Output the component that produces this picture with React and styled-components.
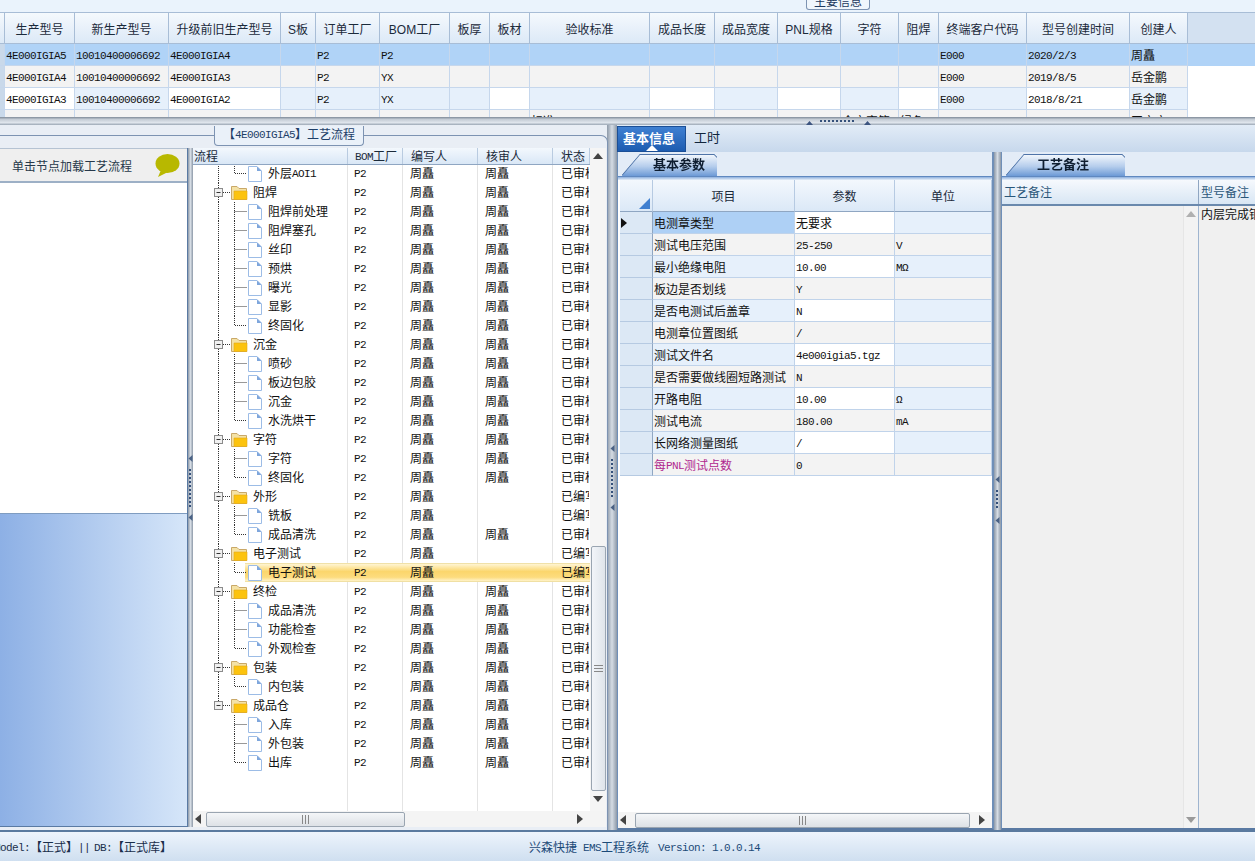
import React from 'react';
import styled, { createGlobalStyle } from 'styled-components';

const GlobalStyle = createGlobalStyle`
  html, body { margin: 0; padding: 0; background: #e9eef5; }
  * { box-sizing: border-box; }
  body { font-family: "Noto Sans CJK SC", "Liberation Sans", sans-serif; font-size: 12px; color: #111; }
`

const Page = styled.div`
  width: 1255px;
  height: 861px;
  overflow: hidden;
  display: flex;
  flex-direction: column;
  background: #e9eef5;
`
const Latin = styled.span`
  font-family: "Liberation Mono", "DejaVu Sans Mono", monospace;
  font-size: 11px;
  letter-spacing: -0.6px;
  vertical-align: 1px;
`
// ascii runs get the narrow mono face, the way the old bitmap font looks
const Txt = ({ children }) => String(children || '').split(/([\x00-\x7f\u03a9]+)/).map((part, i) => (
  i % 2 ? <Latin key={i}>{part}</Latin> : part
))

/* top strip + grid */
const TopStrip = styled.div`
  height: 12px;
  flex: none;
  padding-left: 806px;
  overflow: hidden;
  background: #eaf3fc;
`
const CroppedTab = styled.div`
  width: 64px;
  height: 10px;
  background: #f0f6fc;
  border: 1px solid #7d93b2;
  border-top: none;
  border-radius: 0 0 3px 3px;
  line-height: 1px;
  text-align: center;
  color: #1e3a5f;
`
const TopGrid = styled.div`
  height: 105px;
  flex: none;
  overflow: hidden;
  background: #fff;
`
const HeadRow = styled.div`
  display: flex;
  height: 32px;
  background: #d3e1f1;
  border-top: 1px solid #a8bdd6;
  border-bottom: 1px solid #a8bdd6;
`
const HeadCell = styled.div`
  flex: none;
  width: ${p => p.$w}px;
  display: flex;
  align-items: center;
  justify-content: center;
  background: linear-gradient(#f5f9fd, #dce9f7);
  border-right: 1px solid #a8bdd6;
  font-family: "Liberation Sans", "Noto Sans CJK SC", sans-serif;
  color: #1b2a3a;
  white-space: nowrap;
`
const DataRow = styled.div`
  display: flex;
  height: 22px;
  background: ${p => (p.$selected ? '#b0d3f7' : '#fff')};
`
const DataCell = styled.div`
  flex: none;
  width: ${p => p.$w}px;
  padding-left: 1px;
  line-height: 21px;
  background: ${p => p.$bg};
  border-right: 1px solid #c6d7ec;
  border-bottom: 1px solid #c6d7ec;
  white-space: nowrap;
  overflow: hidden;
`

/* splitters */
const HSplitter = styled.div`
  height: 8px;
  flex: none;
  display: flex;
  padding-left: 806px;
  background: linear-gradient(#7f8a98, #c4ccd5 30%, #dfe5ec 70%, #9aa6b4);
`
const VSplitterBar = styled.div`
  width: ${p => p.$w}px;
  flex: none;
  display: flex;
  justify-content: center;
  align-items: flex-start;
  padding-top: ${p => p.$top}px;
  background: linear-gradient(90deg, #8d99a8, #d5dce4 50%, #8d99a8);
`
const VGrip = ({ height }) => (
  <svg width="5" height={height}>
    <path d="M4.5 0 L0.5 3.5 L4.5 7 Z" fill="#4a6285" />
    <path d={`M2 14 V${height - 14}`} stroke="#34507a" strokeWidth="2" strokeDasharray="2 2" />
    <path d={`M4.5 ${height - 7} L0.5 ${height - 3.5} L4.5 ${height} Z`} fill="#4a6285" />
  </svg>
)
const HGrip = () => (
  <svg width="66" height="8">
    <path d="M0 8 L3.5 4 L7 8 Z" fill="#3d5580" />
    <path d="M14 4 H50" stroke="#34507a" strokeWidth="2" strokeDasharray="2 2" />
    <path d="M58 8 L61.5 4 L65 8 Z" fill="#3d5580" />
  </svg>
)

const Main = styled.div`
  flex: 1;
  display: flex;
  min-height: 0;
`

/* left group */
const LeftGroup = styled.div`
  position: relative;
  width: 607px;
  flex: none;
  padding-top: 10px;
  display: flex;
`
const GroupTitle = styled.div`
  position: absolute;
  left: 214px;
  top: 1px;
  width: 150px;
  height: 20px;
  background: #eaf1f9;
  border: 1px solid #7d93b2;
  border-top: none;
  border-radius: 0 0 4px 4px;
  text-align: center;
  line-height: 16px;
  color: #1e3f68;
`
const GroupFrame = styled.div`
  flex: 1;
  display: flex;
  padding: 12px 1px 3px 0;
  border-top: 1px solid #7d93b2;
  border-right: 1px solid #7d93b2;
  border-top-right-radius: 7px;
`
const SidePanel = styled.div`
  width: 188px;
  flex: none;
  display: flex;
  flex-direction: column;
  border-right: 1px solid #5a7aa3;
  border-bottom: 1px solid #5a7aa3;
`
const SideHead = styled.div`
  height: 35px;
  flex: none;
  display: flex;
  align-items: center;
  justify-content: space-between;
  padding: 0 7px 0 12px;
  background: #efefef;
  border-top: 1px solid #b5c3d3;
  border-bottom: 2px solid #9db0c6;
  color: #27384a;
`
const SideBody = styled.div`
  height: 331px;
  flex: none;
  background: #fff;
  border-bottom: 1px solid #7f9cc0;
`
const SideFill = styled.div`
  flex: 1;
  background: linear-gradient(90deg, #8db0e5, #d6e6f9);
`
const Bubble = () => (
  <svg width="25" height="25" viewBox="0 0 25 25">
    <ellipse cx="12.5" cy="10.5" rx="12" ry="9.5" fill="#b8b800" />
    <path d="M6 17 L3 24 L13 19 Z" fill="#b8b800" />
  </svg>
)

/* tree */
const TreeWrap = styled.div`
  flex: 1;
  display: flex;
  flex-direction: column;
  min-width: 0;
  background: #fff;
`
const TreeMain = styled.div`
  flex: 1;
  display: flex;
  min-height: 0;
`
const TreeTable = styled.div`
  width: 397px;
  flex: none;
  display: flex;
  flex-direction: column;
  overflow: hidden;
`
const TreeHead = styled.div`
  height: 17px;
  flex: none;
  display: flex;
  position: relative;
  z-index: 1;
  background: linear-gradient(#f3f8fd, #d9e7f6);
  border-bottom: 1px solid #8fa6c2;
`
const TreeHeadCell = styled.div`
  flex: none;
  width: ${p => p.$w}px;
  padding-left: ${p => p.$pad}px;
  line-height: 16px;
  border-right: 1px solid #b9cbe0;
  color: #1b2a3a;
  overflow: hidden;
  white-space: nowrap;
`
const TreeRows = styled.div`
  flex: 1;
  display: flex;
  flex-direction: column;
  margin-top: -1px;
  min-height: 0;
`
const TreeRow = styled.div`
  display: flex;
  flex: none;
  height: 19px;
  background: ${p => (p.$selected
    ? 'linear-gradient(#e9d896, #fff3cc 8%, #fbd66c 45%, #fddc7e 75%, #fff0bf 92%, #e9d896) right / 345px 100% no-repeat'
    : 'none')};
`
const TreeFiller = styled.div`
  flex: 1;
  display: flex;
`
const TreeCell = styled.div`
  flex: none;
  width: ${p => p.$w}px;
  padding-left: ${p => p.$pad}px;
  padding-bottom: 2px;
  display: flex;
  align-items: center;
  border-right: 1px solid ${p => (p.$plain ? 'transparent' : '#e4e4e4')};
  overflow: hidden;
  white-space: nowrap;
`
const TreeLatin = styled(Latin)`
  margin-top: 2px;
`
const GuideSvg = styled.svg`
  flex: none;
  margin-bottom: -2px;
`
const Guide = ({ folder, last, end }) => {
  const root = folder ? (end ? 'M25.5 0 V5' : 'M25.5 0 V5 M25.5 14 V19') : (end ? '' : 'M25.5 0 V19')
  return (
    <GuideSvg width={folder ? 60 : 75} height="19">
      {root && <path d={root} stroke="#333" strokeDasharray="1 1" />}
      {folder ? (
        <g>
          <rect x="21.5" y="5.5" width="8" height="8" fill="#f1f1f1" stroke="#8b8b8b" />
          <path d="M23.5 9.5 H27.5" stroke="#333" />
          <path d="M30 9.5 H37" stroke="#333" strokeDasharray="1 1" />
          <path d="M38.5 3.5 H44 L46 5.5 H53.5 V16.5 H38.5 Z" fill="#f4e2a6" stroke="#c9a868" />
          <path d="M41 8 H54 V16.5 H41 Z" fill="#fcc30e" stroke="#e0a91c" strokeWidth="0.6" />
        </g>
      ) : (
        <g>
          <path d={last ? 'M41.5 0 V9.5 H54' : 'M41.5 0 V19 M41.5 9.5 H54'} fill="none" stroke="#333" strokeDasharray="1 1" />
          <path d="M55.5 2.5 H64 L68.5 7 V17.5 H55.5 Z" fill="#fff" stroke="#9cbce6" />
          <path d="M64 2.5 V7 H68.5 Z" fill="#7ea6dc" />
        </g>
      )}
    </GuideSvg>
  )
}

/* scrollbars */
const VTrack = styled.div`
  width: 16px;
  flex: none;
  display: flex;
  flex-direction: column;
  align-items: center;
  background: #f5f5f5;
`
const VThumb = styled.div`
  width: 15px;
  margin-top: ${p => p.$top}px;
  height: ${p => p.$h}px;
  flex: none;
  display: flex;
  align-items: center;
  justify-content: center;
  background: linear-gradient(90deg, #f2f5f9, #dfe4ea);
  border: 1px solid #9aa5b1;
  border-radius: 2px;
`
const VGripLines = styled.div`
  width: 9px;
  height: 7px;
  border-top: 1px solid #888;
  border-bottom: 1px solid #888;
  background: linear-gradient(#888, #888) center / 100% 1px no-repeat;
`
const HTrack = styled.div`
  height: ${p => p.$h || 16}px;
  flex: none;
  display: flex;
  align-items: center;
  background: #f4f4f4;
  width: ${p => p.$w}px;
`
const HThumb = styled.div`
  margin-left: ${p => p.$left}px;
  width: ${p => p.$w}px;
  height: 15px;
  flex: none;
  display: flex;
  align-items: center;
  justify-content: center;
  background: linear-gradient(#f4f6f8, #dde1e6);
  border: 1px solid #9aa5b1;
  border-radius: 2px;
`
const HGripLines = styled.div`
  width: 7px;
  height: 9px;
  border-left: 1px solid #888;
  border-right: 1px solid #888;
  background: linear-gradient(#888, #888) center / 1px 100% no-repeat;
`
const ArrowSlot = styled.div`
  flex: none;
  width: ${p => p.$w || 16}px;
  height: 16px;
  margin-left: ${p => p.$left || 0}px;
  display: flex;
  align-items: center;
  justify-content: center;
`
const Arrow = ({ dir, color = '#444' }) => {
  const shapes = { up: '0,7 5,1 10,7', down: '0,1 5,7 10,1', left: '7,0 1,5 7,10', right: '1,0 7,5 1,10' };
  const vertical = dir === 'up' || dir === 'down';
  return (
    <svg width={vertical ? 10 : 8} height={vertical ? 8 : 10}>
      <polygon points={shapes[dir]} fill={color} />
    </svg>
  );
}
const HScrollbar = ({ w, thumbLeft, thumbW, gap }) => (
  <HTrack $w={w}>
    <ArrowSlot $left={1} $w={8}><Arrow dir="left" /></ArrowSlot>
    <HThumb $left={thumbLeft} $w={thumbW}><HGripLines /></HThumb>
    <ArrowSlot $left={gap} $w={8}><Arrow dir="right" /></ArrowSlot>
  </HTrack>
)

/* right side */
const RightSide = styled.div`
  flex: 1;
  min-width: 0;
  display: flex;
  flex-direction: column;
`
const TabStrip = styled.div`
  height: 27px;
  flex: none;
  display: flex;
  background: linear-gradient(#e2ecf7, #c7d8ec);
`
const ActiveTab = styled.div`
  position: relative;
  width: 69px;
  margin-top: 1px;
  padding-right: 5px;
  text-align: center;
  line-height: 21px;
  font-size: 13px;
  font-weight: 700;
  color: #fff;
  background: linear-gradient(#3f80d2, #1d5cb0);
  border: 1px solid #1b4f96;
  &::after {
    content: '';
    position: absolute;
    left: 28px;
    bottom: 0;
    border: 6px solid transparent;
    border-top: none;
    border-bottom-color: #fff;
  }
`
const PlainTab = styled.div`
  padding-left: 8px;
  line-height: 23px;
  font-size: 13px;
  color: #10243c;
`
const Panels = styled.div`
  flex: 1;
  display: flex;
  min-height: 0;
`
const Panel = styled.div`
  width: ${p => p.$w}px;
  flex: ${p => (p.$w ? 'none' : 1)};
  display: flex;
  flex-direction: column;
  background: #fff;
  border-left: 1px solid #6f8fb8;
  border-right: ${p => (p.$w ? '2px solid #6f8fb8' : 'none')};
  border-bottom: 2px solid #5a7aa3;
`
const SubTabRow = styled.div`
  height: 25px;
  flex: none;
  padding: 3px 0 0 4px;
  background: #e3ecf7;
  border-bottom: 1px solid #5f88c0;
`
const SubTabEdge = styled.div`
  width: ${p => p.$w}px;
  filter: drop-shadow(0 -0.5px 0 #4f74a8) drop-shadow(0.5px 0 0 #4f74a8);
`
const SubTab = styled.div`
  height: 21px;
  padding-left: ${p => p.$pad}px;
  line-height: 18px;
  font-size: 13px;
  font-weight: 700;
  color: #0e1d30;
  background: linear-gradient(#f1f6fc, #b5cdec 55%, #6d9ad6);
  clip-path: polygon(0 100%, 18px 0, calc(100% - 3px) 0, 100% 3px, 100% 100%);
`
const SubBand = styled.div`
  height: 3px;
  flex: none;
  background: linear-gradient(#8db0de, #e6eef8);
`
const ParamBody = styled.div`
  flex: 1;
  min-height: 0;
  padding-left: 2px;
  background: #fff;
`
const ParamRow = styled.div`
  display: flex;
  height: 22px;
`
const ParamHeadRow = styled.div`
  display: flex;
  height: 32px;
`
const ParamHead = styled.div`
  flex: none;
  width: ${p => p.$w}px;
  position: relative;
  display: flex;
  align-items: center;
  justify-content: center;
  background: linear-gradient(#f3f8fd, #dbe8f7);
  border-right: 1px solid #b6cae2;
  border-bottom: 1px solid #8fa6c2;
  color: #1b2a3a;
`
const CornerMark = styled.svg`
  position: absolute;
  right: 2px;
  bottom: 2px;
`
const RowHead = styled.div`
  flex: none;
  width: 33px;
  display: flex;
  align-items: center;
  background: #dce8f5;
  border-right: 1px solid #8fa6c2;
  border-bottom: 1px solid #b6cae2;
`
const ParamCell = styled.div`
  flex: none;
  width: ${p => p.$w}px;
  padding-left: 1px;
  line-height: 21px;
  background: ${p => p.$bg};
  color: ${p => p.$color || '#111'};
  border-right: 1px solid #c0d3ea;
  border-bottom: 1px solid #c0d3ea;
  white-space: nowrap;
  overflow: hidden;
`
const NoteHeadRow = styled.div`
  height: 26px;
  flex: none;
  display: flex;
  background: linear-gradient(#f6f9fd, #d8e6f4);
  border-bottom: 2px solid #6a89ad;
`
const NoteHead = styled.div`
  flex: none;
  width: ${p => p.$w}px;
  padding-left: 2px;
  line-height: 23px;
  color: #2a5679;
  border-right: 1px solid #8fa6c2;
`
const NoteBody = styled.div`
  flex: 1;
  min-height: 0;
  display: flex;
  background: #f0f0f0;
`
const NoteBlank = styled.div`
  width: 181px;
  flex: none;
`
const NoteScroll = styled.div`
  width: 16px;
  flex: none;
  display: flex;
  flex-direction: column;
  align-items: center;
  justify-content: space-between;
  padding: 4px 0;
  background: #f3f3f3;
  border-left: 1px solid #e6e6e6;
  border-right: 1px solid #9fb5d0;
`
const NoteText = styled.div`
  flex: 1;
  padding-left: 2px;
  white-space: nowrap;
  overflow: hidden;
  line-height: 16px;
`

/* status bar */
const StatusBar = styled.div`
  height: 31px;
  flex: none;
  display: flex;
  align-items: center;
  overflow: hidden;
  background: linear-gradient(#edf4fc, #cfdff0);
  border-top: 2px solid #5a7a9f;
  color: #1c4a78;
`
const StatusLeft = styled.div`
  width: 535px;
  flex: none;
  margin-left: -6px;
  color: #1a2e4a;
`
const StatusPipes = styled(Latin)`
  margin-right: 4px;
`
const StatusCenter = styled.div`
  white-space: pre;
`
const VersionText = styled(Latin)`
  margin-left: 3px;
`

const NAME = '周矗'
const topCols = [5, 70, 94, 112, 35, 64, 70, 40, 40, 120, 65, 63, 63, 58, 40, 88, 103, 58]
const topHeads = ['', '生产型号', '新生产型号', '升级前旧生产型号', 'S板', '订单工厂', 'BOM工厂', '板厚', '板材', '验收标准', '成品长度', '成品宽度', 'PNL规格', '字符', '阻焊', '终端客户代码', '型号创建时间', '创建人']
const topRows = [
  { cells: ['', '4E000IGIA5', '10010400006692', '4E000IGIA4', '', 'P2', 'P2', '', '', '', '', '', '', '', '', 'E000', '2020/2/3', NAME], kind: 'sel' },
  { cells: ['', '4E000IGIA4', '10010400006692', '4E000IGIA3', '', 'P2', 'YX', '', '', '', '', '', '', '', '', 'E000', '2019/8/5', '岳金鹏'], kind: 'gray' },
  { cells: ['', '4E000IGIA3', '10010400006692', '4E000IGIA2', '', 'P2', 'YX', '', '', '', '', '', '', '', '', 'E000', '2018/8/21', '岳金鹏'], kind: 'blue' },
  { cells: ['', '', '', '', '', '', '', '', '', '            标准', '', '', '', '全文字符', '绿色', '', '', '田文文'], kind: 'gray' },
]
const blueWhite = [1, 3, 8, 10, 12, 14, 16]

const topCellBg = (kind, col) => {
  if (col === 0) return '#c9d9ea'
  if (kind === 'sel') return '#b0d3f7'
  if (kind === 'gray') return '#f3f3f3'
  return blueWhite.includes(col) ? '#fff' : '#e6f0fb'
}

const groups = [
  ['', ['外层AOI1']],
  ['阻焊', ['阻焊前处理', '阻焊塞孔', '丝印', '预烘', '曝光', '显影', '终固化']],
  ['沉金', ['喷砂', '板边包胶', '沉金', '水洗烘干']],
  ['字符', ['字符', '终固化']],
  ['外形', ['铣板', '成品清洗']],
  ['电子测试', ['电子测试']],
  ['终检', ['成品清洗', '功能检查', '外观检查']],
  ['包装', ['内包装']],
  ['成品仓', ['入库', '外包装', '出库']],
]
const unreviewed = new Set(['外形', '铣板', '电子测试'])
const treeRows = groups.flatMap(([folder, leaves], g) => {
  const isEnd = g === groups.length - 1
  const head = folder ? [{ name: folder, folder: true, end: isEnd }] : []
  return head.concat(leaves.map((name, i) => ({ name, last: i === leaves.length - 1, end: isEnd })))
})
const treeCols = [155, 55, 75, 75, 37]

const params = [
  ['电测章类型', '无要求', ''],
  ['测试电压范围', '25-250', 'V'],
  ['最小绝缘电阻', '10.00', 'MΩ'],
  ['板边是否划线', 'Y', ''],
  ['是否电测试后盖章', 'N', ''],
  ['电测章位置图纸', '/', ''],
  ['测试文件名', '4e000igia5.tgz', ''],
  ['是否需要做线圈短路测试', 'N', ''],
  ['开路电阻', '10.00', 'Ω'],
  ['测试电流', '180.00', 'mA'],
  ['长网络测量图纸', '/', ''],
  ['每PNL测试点数', '0', ''],
]
const paramCols = [142, 100, 97]

const App = () => (
  <Page>
    <GlobalStyle />
    <TopStrip><CroppedTab>主要信息</CroppedTab></TopStrip>
    <TopGrid>
      <HeadRow>
        {topHeads.map((h, i) => <HeadCell key={i} $w={topCols[i]}>{h}</HeadCell>)}
      </HeadRow>
      {topRows.map((row, r) => (
        <DataRow key={r} $selected={row.kind === 'sel'}>
          {row.cells.map((c, i) => (
            <DataCell key={i} $w={topCols[i]} $bg={topCellBg(row.kind, i)}><Txt>{c}</Txt></DataCell>
          ))}
        </DataRow>
      ))}
    </TopGrid>
    <HSplitter><HGrip /></HSplitter>
    <Main>
      <LeftGroup>
        <GroupTitle><Txt>【4E000IGIA5】</Txt>工艺流程</GroupTitle>
        <GroupFrame>
          <SidePanel>
            <SideHead>单击节点加载工艺流程<Bubble /></SideHead>
            <SideBody />
            <SideFill />
          </SidePanel>
          <VSplitterBar $w={5} $top={307}><VGrip height={66} /></VSplitterBar>
          <TreeWrap>
            <TreeMain>
              <TreeTable>
                <TreeHead>
                  <TreeHeadCell $w={155} $pad={1}>流程</TreeHeadCell>
                  <TreeHeadCell $w={55} $pad={7}><Txt>BOM工厂</Txt></TreeHeadCell>
                  <TreeHeadCell $w={75} $pad={8}>编写人</TreeHeadCell>
                  <TreeHeadCell $w={75} $pad={8}>核审人</TreeHeadCell>
                  <TreeHeadCell $w={37} $pad={8}>状态</TreeHeadCell>
                </TreeHead>
                <TreeRows>
                  {treeRows.map((row, i) => {
                    const selected = i === 21
                    const pending = unreviewed.has(row.name)
                    return (
                      <TreeRow key={i} $selected={selected}>
                        <TreeCell $w={treeCols[0]} $pad={0} $plain={selected}>
                          <Guide folder={row.folder} last={row.last} end={row.end} />
                          <span><Txt>{row.name}</Txt></span>
                        </TreeCell>
                        <TreeCell $w={treeCols[1]} $pad={6} $plain={selected}><TreeLatin>P2</TreeLatin></TreeCell>
                        <TreeCell $w={treeCols[2]} $pad={7} $plain={selected}>{NAME}</TreeCell>
                        <TreeCell $w={treeCols[3]} $pad={7} $plain={selected}>{pending ? '' : NAME}</TreeCell>
                        <TreeCell $w={treeCols[4]} $pad={8} $plain>{pending ? '已编写' : '已审核'}</TreeCell>
                      </TreeRow>
                    )
                  })}
                  <TreeFiller>
                    {treeCols.map((w, i) => <TreeCell key={i} $w={w} $pad={0} $plain={i === 4} />)}
                  </TreeFiller>
                </TreeRows>
              </TreeTable>
              <VTrack>
                <ArrowSlot><Arrow dir="up" /></ArrowSlot>
                <VThumb $top={382} $h={245}><VGripLines /></VThumb>
                <ArrowSlot><Arrow dir="down" /></ArrowSlot>
              </VTrack>
            </TreeMain>
            <HScrollbar w={413} thumbLeft={4} thumbW={199} gap={171} />
          </TreeWrap>
        </GroupFrame>
      </LeftGroup>
      <VSplitterBar $w={10} $top={320}><VGrip height={66} /></VSplitterBar>
      <RightSide>
        <TabStrip>
          <ActiveTab>基本信息</ActiveTab>
          <PlainTab>工时</PlainTab>
        </TabStrip>
        <Panels>
          <Panel $w={377}>
            <SubTabRow><SubTabEdge $w={95}><SubTab $pad={31}>基本参数</SubTab></SubTabEdge></SubTabRow>
            <SubBand />
            <ParamBody>
              <ParamHeadRow>
                <ParamHead $w={33}>
                  <CornerMark width="11" height="11"><polygon points="11,0 11,11 0,11" fill="#3f7fd0" /></CornerMark>
                </ParamHead>
                <ParamHead $w={142}>项目</ParamHead>
                <ParamHead $w={100}>参数</ParamHead>
                <ParamHead $w={97}>单位</ParamHead>
              </ParamHeadRow>
              {params.map(([item, value, unit], i) => {
                const stripe = i % 2 ? '#f3f3f3' : '#e6f0fb'
                return (
                  <ParamRow key={i}>
                    <RowHead>{i === 0 && <Arrow dir="right" color="#111" />}</RowHead>
                    <ParamCell $w={paramCols[0]} $bg={i === 0 ? '#aed0f5' : stripe} $color={i === 11 ? '#b0288f' : undefined}>
                      <Txt>{item}</Txt>
                    </ParamCell>
                    <ParamCell $w={paramCols[1]} $bg={i % 2 ? '#f3f3f3' : '#fff'}><Txt>{value}</Txt></ParamCell>
                    <ParamCell $w={paramCols[2]} $bg={stripe}><Txt>{unit}</Txt></ParamCell>
                  </ParamRow>
                )
              })}
            </ParamBody>
            <HScrollbar w={374} thumbLeft={8} thumbW={335} gap={8} />
          </Panel>
          <VSplitterBar $w={7} $top={324}><VGrip height={48} /></VSplitterBar>
          <Panel>
            <SubTabRow><SubTabEdge $w={119}><SubTab $pad={31}>工艺备注</SubTab></SubTabEdge></SubTabRow>
            <SubBand />
            <NoteHeadRow>
              <NoteHead $w={197}>工艺备注</NoteHead>
              <NoteHead $w={60}>型号备注</NoteHead>
            </NoteHeadRow>
            <NoteBody>
              <NoteBlank />
              <NoteScroll>
                <Arrow dir="up" color="#b0b0b0" />
                <Arrow dir="down" color="#9a9a9a" />
              </NoteScroll>
              <NoteText>内层完成铜厚</NoteText>
            </NoteBody>
          </Panel>
        </Panels>
      </RightSide>
    </Main>
    <StatusBar>
      <StatusLeft><Txt>Model:</Txt>【正式】<StatusPipes>||</StatusPipes><Txt>DB:</Txt>【正式库】</StatusLeft>
      <StatusCenter><Txt>兴森快捷 EMS工程系统 </Txt><VersionText>Version: 1.0.0.14</VersionText></StatusCenter>
    </StatusBar>
  </Page>
)

export default App;
